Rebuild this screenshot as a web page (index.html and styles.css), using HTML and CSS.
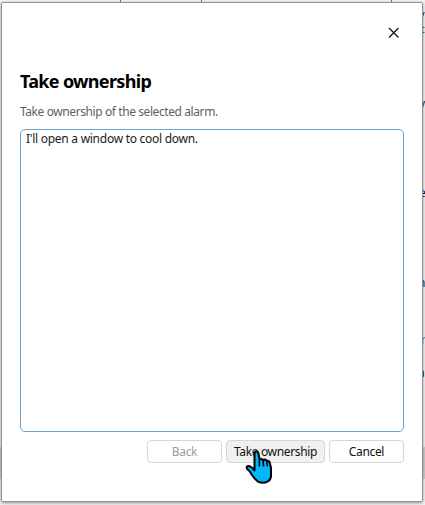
FILE: index.html
```html
<!DOCTYPE html>
<html lang="en">
<head>
<meta charset="utf-8">
<title>Take ownership</title>
<link rel="stylesheet" href="styles.css">
</head>
<body>
<div class="backdrop" aria-hidden="true">
  <i class="rule rule-a"></i><i class="rule rule-b"></i><i class="rule rule-c"></i>
  <i class="band"></i>
  <span class="bit bit-1">v</span>
  <span class="bit bit-2">t</span>
  <span class="bit bit-3">v</span>
  <span class="bit bit-4">e</span>
  <span class="bit bit-5">n</span>
  <span class="bit bit-6">r</span>
  <span class="bit bit-7">a</span>
</div>
<main class="dialog" role="dialog" aria-labelledby="title">
  <header class="bar">
    <button class="close" aria-label="Close"><svg width="12" height="12" viewBox="0 0 12 12"><path d="M1 1L10.5 10.5M10.5 1L1 10.5"/></svg></button>
  </header>
  <h1 class="title" id="title"><span>Take ownership</span></h1>
  <p class="desc"><span>Take ownership of the selected alarm.</span></p>
  <div class="comment" contenteditable="true" spellcheck="false"><span>I'll open a window to cool down.</span></div>
  <footer class="actions">
    <button class="btn btn-off" disabled>Back</button>
    <button class="btn btn-hover"><span>Take ownership</span></button>
    <button class="btn btn-cancel">Cancel</button>
  </footer>
</main>
<svg class="pointer" width="28" height="36" viewBox="0 0 28 36">
  <path d="M9.5 19V4.8Q9.5 2.5 11.4 2.5Q13.2 2.5 13.5 4.8L14.6 10.3Q16.5 9.6 18 11Q20 10 21.7 11.8Q24.5 11.5 25 14.5L26 19V27.5Q25.5 31 22.5 32.6Q18 35 13 32.6Q9.5 30 7 26Q5 22 2 19.7Q1 17.2 3.2 17Q6 17 9.5 21.5Z"/>
  <path class="crease" d="M14.4 10V17.5M18 11L18.6 17.5M21.8 12L22.4 17.5"/>
</svg>
</body>
</html>
```
FILE: styles.css
```css
* { box-sizing: border-box; }
body {
  margin: 0;
  width: 425px;
  height: 505px;
  overflow: hidden;
  position: relative;
  background: #f0f0f0;
  font: 12px/16px "Noto Sans", "Open Sans", sans-serif;
  color: #1a1a1a;
}
.backdrop i, .bit { position: absolute; }
.rule { top: 0; width: 1px; height: 3px; background: #2f7fb8; }
.rule-a { left: 120px; }
.rule-b { left: 201px; }
.rule-c { left: 391px; }
.band { left: 0; top: 447px; width: 425px; height: 32px; background: #c9c9c9; }
.bit { left: 419px; line-height: 12px; }
.bit-1 { top: 8px; font-size: 11px; }
.bit-2 { top: 23px; left: 421px; font-size: 10px; }
.bit-3 { top: 98px; }
.bit-4 { top: 187px; left: 419px; }
.bit-5 { top: 277px; left: 418px; }
.bit-6 { top: 334px; left: 421px; color: #2f86c9; }
.bit-7 { top: 367px; left: 418px; }
.dialog {
  position: relative;
  display: flex;
  flex-direction: column;
  width: 422px;
  height: 500px;
  margin: 2px 0 0 1px;
  padding: 13px 17px 0 18px;
  border: 1px solid #949494;
  border-radius: 2px;
  background: #fff;
  box-shadow: 0 1px 3px #0006;
}
.bar { display: flex; justify-content: flex-end; height: 28px; }
.close {
  width: 22px;
  height: 28px;
  padding: 0;
  border: 0;
  background: none;
}
.close svg { display: block; margin: 6px 0 0 5px; fill: none; stroke: #111; stroke-width: 1.25; }
.title { margin: 24px 0 0; font-size: 18px; line-height: 27px; color: #000; letter-spacing: -.68px; }
.desc { margin: 9px 0 0; color: #5f5f5f; letter-spacing: -.41px; }
.comment {
  height: 303px;
  margin: 9px 1px 0 0;
  padding: 1px 5px;
  border: 1px solid #66a3ce;
  border-radius: 5px;
  letter-spacing: -.27px;
  outline: none;
}
.actions { display: flex; justify-content: flex-end; gap: 4px; margin: 8px 1px 0 0; }
.btn {
  width: 75px;
  height: 23px;
  padding: 0;
  border: 1px solid #d6d6d6;
  border-radius: 4px;
  background: #fff;
  font: inherit;
  line-height: 21px;
  letter-spacing: -.35px;
  color: #111;
}
.btn-off { color: #9d9d9d; }
.btn-hover { width: 99px; background: #f0f0f0; }
.pointer {
  position: absolute;
  left: 245px;
  top: 449px;
  fill: #00b7fb;
  stroke: #000;
  stroke-width: 2;
  stroke-linejoin: round;
}
.crease { fill: none; stroke-width: 1.6; }
```
